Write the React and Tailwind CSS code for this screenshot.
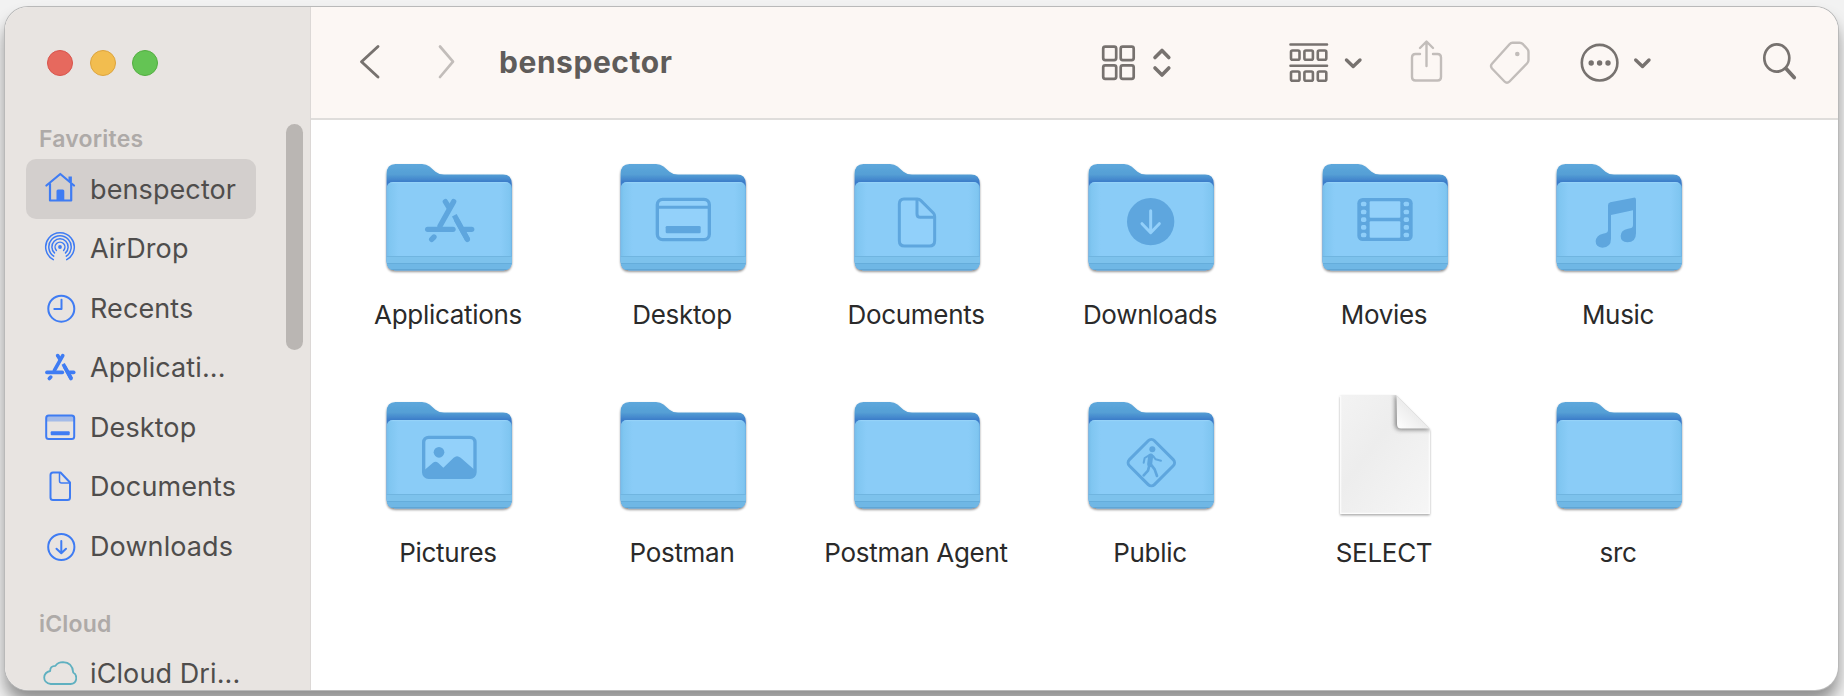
import React from "react";

const GLYPH = "#5ea6de";

function AppsShape({ color, sw = 16 }) {
  return (
    <g stroke={color} strokeWidth={sw} strokeLinecap="round" fill="none">
      <path d="M256 185 L266 201" />
      <path d="M281 185 L240 258" />
      <path d="M283 226 L323 299" strokeLinecap="butt" />
      <path d="M290 240 L322 298" />
      <path d="M203 268 L279 268" />
      <path d="M314 268 L335 268" />
      <path d="M222 291 L215 298" />
    </g>
  );
}

const glyphs = {
  apps: (
    <g transform="translate(-19 -14) scale(.33333)">
      <AppsShape color={GLYPH} />
    </g>
  ),
  desktop: (
    <g transform="translate(-253 -14) scale(.33333)" stroke={GLYPH} fill="none">
      <rect x="892" y="178" width="156" height="121" rx="16" strokeWidth="10" fill="#93d1fa" />
      <path d="M892 202 H1048" strokeWidth="9" />
      <rect x="917" y="258" width="105" height="22" rx="4" fill={GLYPH} stroke="none" />
    </g>
  ),
  document: (
    <g transform="translate(-17 -14) scale(.33333)" stroke={GLYPH} fill="none" strokeWidth="9" strokeLinejoin="round">
      <path d="M222 177 H262 Q268 177 272 181 L310 219 Q314 223 314 230 V302 Q314 318 298 318 H224 Q208 318 208 302 V192 Q208 177 222 177 Z" fill="#91d0fa" />
      <path d="M261 180 V222 Q261 232 271 232 H311" />
    </g>
  ),
  download: (
    <g transform="translate(-251 -14) scale(.33333)">
      <circle cx="962" cy="245" r="71" fill={GLYPH} />
      <path d="M962 212 V276 M936 251 L962 278 L988 251" stroke="#93d0fa" strokeWidth="9" fill="none" strokeLinecap="round" strokeLinejoin="round" />
    </g>
  ),
  movie: (
    <g transform="translate(-25 -14) scale(.33333)">
      <rect x="202" y="174" width="166" height="129" rx="16" fill={GLYPH} />
      <rect x="239" y="184" width="92" height="49" rx="3" fill="#93d1fa" />
      <rect x="239" y="244" width="92" height="49" rx="3" fill="#93d1fa" />
      {[185, 209, 232, 255, 278].map((y) => (
        <g key={y} fill="#8fcef9">
          <rect x="213" y={y} width="16" height="14" rx="5" />
          <rect x="341" y={y} width="16" height="14" rx="5" />
        </g>
      ))}
    </g>
  ),
  music: (
    <g transform="translate(-259 -14) scale(.33333)" fill={GLYPH}>
      <path d="M954 196 Q954 189 961 187 L1031 173 Q1038 172 1038 179 V280 Q1038 307 1012 307 Q992 306 992 288 Q992 270 1014 266 L1024 264 Q1029 262 1029 256 V211 L963 225 V296 Q963 322 937 323 Q917 322 917 304 Q918 286 939 281 L948 279 Q954 277 954 271 Z" />
    </g>
  ),
  picture: (
    <g transform="translate(-19 -12) scale(.33333)">
      <rect x="191" y="172" width="154" height="120" rx="15" fill="#93d1fa" stroke={GLYPH} strokeWidth="10" />
      <circle cx="237" cy="217" r="16" fill={GLYPH} />
      <path d="M191 272 L219 248 Q227 242 235 249 L250 263 L281 233 Q291 224 302 233 L345 271 V282 Q345 293 334 293 H202 Q191 293 191 282 Z" fill={GLYPH} />
    </g>
  ),
  walk: (
    <g transform="translate(-21 -12) scale(.33333)" stroke={GLYPH} fill="none" strokeLinecap="round" strokeLinejoin="round">
      <rect x="221" y="195" width="106" height="106" rx="13" transform="rotate(45 274 248)" strokeWidth="9" />
      <circle cx="277" cy="208" r="9" fill={GLYPH} stroke="none" />
      <path d="M272 228 L269 252" strokeWidth="15" />
      <path d="M266 227 L254 234 L251 248 M279 228 L287 238 L303 242" strokeWidth="6" />
      <path d="M268 256 L264 272 L251 286 M273 254 L284 268 L291 288" strokeWidth="8" />
    </g>
  ),
};

function Folder({ glyph }) {
  return (
    <svg width="140" height="130" viewBox="0 0 140 130">
      <defs>
        <linearGradient id="back" x1="0" y1="10" x2="0" y2="29" gradientUnits="userSpaceOnUse">
          <stop offset="0" stopColor="#5ea8dc" />
          <stop offset=".55" stopColor="#559fd5" />
          <stop offset=".95" stopColor="#3b7cc9" />
        </linearGradient>
        <linearGradient id="front" x1="0" y1="0" x2="1" y2="0">
          <stop offset="0" stopColor="#74bce9" />
          <stop offset=".03" stopColor="#80c6f1" />
          <stop offset=".1" stopColor="#8accf7" />
          <stop offset=".9" stopColor="#8accf7" />
          <stop offset=".97" stopColor="#80c6f1" />
          <stop offset="1" stopColor="#74bce9" />
        </linearGradient>
        <filter id="fshadow" x="-10%" y="-10%" width="120%" height="130%">
          <feDropShadow dx="0" dy="1.5" stdDeviation="1.2" floodColor="#000" floodOpacity=".48" />
        </filter>
        <clipPath id="frontclip">
          <path d="M7.600 35 Q7.600 28 14.500 28 H126 Q132.800 28 132.800 35 V107 Q132.800 116.300 124 116.300 H16.500 Q7.600 116.300 7.600 107 Z" />
        </clipPath>
      </defs>
      <g filter="url(#fshadow)">
        <path d="M7.600 20 Q7.600 10 16.500 10 H43 Q47.500 10 50.500 12.500 L56.500 17.700 Q60 20.600 65 20.600 H124 Q132.800 20.600 132.800 30 V107 Q132.800 116.300 124 116.300 H16.500 Q7.600 116.300 7.600 107 Z" fill="url(#back)" />
      </g>
      <g clipPath="url(#frontclip)">
        <rect x="7" y="28" width="127" height="89" fill="url(#front)" />
        <rect x="7" y="28" width="127" height="1.200" fill="#95d2f8" />
        <rect x="7" y="102" width="127" height="7" fill="#7dc2ec" />
        <rect x="7" y="102" width="127" height="1" fill="#70b5e0" />
        <rect x="7" y="109" width="127" height="8" fill="#6fb7e5" />
        <rect x="7" y="109" width="127" height="1" fill="#65addb" />
        <rect x="7" y="115.300" width="127" height="1.500" fill="#5a9fcf" />
      </g>
      {glyph && glyphs[glyph]}
    </svg>
  );
}

function Paper() {
  return (
    <svg width="140" height="130" viewBox="0 0 140 130">
      <defs>
        <linearGradient id="sheet" x1="0" y1="0" x2="1" y2="1">
          <stop offset="0" stopColor="#f3f3f3" />
          <stop offset=".4" stopColor="#ededed" />
          <stop offset="1" stopColor="#f6f6f6" />
        </linearGradient>
        <linearGradient id="curl" x1="81" y1="37" x2="98" y2="20" gradientUnits="userSpaceOnUse">
          <stop offset="0" stopColor="#ffffff" />
          <stop offset="1" stopColor="#ececec" />
        </linearGradient>
        <filter id="pshadow" x="-10%" y="-10%" width="120%" height="120%">
          <feDropShadow dx="0" dy="1.4" stdDeviation=".9" floodColor="#000" floodOpacity=".34" />
        </filter>
        <filter id="soft" x="-30%" y="-30%" width="160%" height="160%">
          <feGaussianBlur stdDeviation="2" />
        </filter>
        <clipPath id="sheetclip">
          <path d="M25 3 H81 L115 37 V122 H25 Z" />
        </clipPath>
      </defs>
      <path d="M26.500 3 H81 L115 37 V120.500 Q115 122 113.500 122 H26.500 Q25 122 25 120.500 V4.500 Q25 3 26.500 3 Z" fill="url(#sheet)" filter="url(#pshadow)" />
      <path d="M25.700 4 V121.300 H114.300 V37" fill="none" stroke="#fcfcfc" strokeWidth="1.200" />
      <g clipPath="url(#sheetclip)">
        <path d="M80 2 V32 Q80 38 86 38 H116 Z" fill="#777" opacity=".9" filter="url(#soft)" />
      </g>
      <path d="M81.500 3.500 L114.500 36.500 H86 Q82 36.500 82 32 Z" fill="url(#curl)" />
    </svg>
  );
}

const files = [
  ["Applications", "apps"],
  ["Desktop", "desktop"],
  ["Documents", "document"],
  ["Downloads", "download"],
  ["Movies", "movie"],
  ["Music", "music"],
  ["Pictures", "picture"],
  ["Postman", null],
  ["Postman Agent", null],
  ["Public", "walk"],
  ["SELECT", "paper"],
  ["src", null],
];

const BLUE = "#3f7cf3";

const sideIcons = {
  home: (
    <g fill="none" stroke={BLUE} strokeWidth="2.200" strokeLinecap="round" strokeLinejoin="round">
      <path d="M3.400 13.500 L17.300 2 L31 13.500" />
      <path d="M7 12 V28.500 H28.200 V12" />
      <path d="M27.200 10 V4.500" strokeWidth="3.400" strokeLinecap="butt" />
      <path d="M13.500 29 V19 Q13.500 17.500 15 17.500 H19.800 Q21.300 17.500 21.300 19 V29 Z" fill={BLUE} stroke="none" />
    </g>
  ),
  airdrop: (
    <g fill="none" stroke={BLUE} strokeWidth="1.500" strokeLinecap="round">
      <path d="M10.300 28.600 A14.300 14.300 0 1 1 23.700 28.600" />
      <path d="M10.700 25.200 A11.200 11.200 0 1 1 23.300 25.200" />
      <path d="M11.500 21.900 A8.100 8.100 0 1 1 22.500 21.900" />
      <path d="M13.400 19.400 A4.900 4.900 0 1 1 20.600 19.400" />
      <circle cx="17" cy="16" r="1.900" fill={BLUE} stroke="none" />
    </g>
  ),
  clock: (
    <g fill="none" stroke={BLUE} strokeWidth="2" strokeLinecap="round" strokeLinejoin="round">
      <circle cx="18.300" cy="17.700" r="13" />
      <path d="M18.500 8.800 V18 H11.300" />
    </g>
  ),
  apps: (
    <g transform="translate(-37.300 -32) scale(.203)">
      <AppsShape color={BLUE} sw={18} />
    </g>
  ),
  desktop: (
    <g fill="none" stroke={BLUE} strokeWidth="2">
      <rect x="3.200" y="5.500" width="28" height="23.500" rx="2.500" />
      <rect x="3" y="5.500" width="28.500" height="6" fill={BLUE} fillOpacity=".4" stroke="none" />
      <rect x="7.700" y="21.300" width="19" height="4" rx="1" fill={BLUE} stroke="none" />
    </g>
  ),
  document: (
    <g fill="none" stroke={BLUE} strokeWidth="2" strokeLinejoin="round">
      <path d="M10 3.500 H17.500 L27 13.500 V28.500 Q27 31 24.500 31 H10 Q7.500 31 7.500 28.500 V6 Q7.500 3.500 10 3.500 Z" />
      <path d="M16.500 4 V12 Q16.500 14 18.500 14 H26.500" strokeWidth="1.500" />
    </g>
  ),
  download: (
    <g fill="none" stroke={BLUE} strokeWidth="2" strokeLinecap="round" strokeLinejoin="round">
      <circle cx="18.300" cy="18" r="13.100" />
      <path d="M18.300 12 V24 M13.500 19.700 L18.300 24.300 L23 19.700" />
    </g>
  ),
  cloud: (
    <path
      d="M7.800 28 Q1.200 27 1.200 21.500 Q1.500 16.300 7.200 15 Q7 10 12.500 9.800 Q15 6.200 20 6.200 Q29.500 6.500 30.200 16.500 Q33.300 18 33.300 22 Q33 28 27.500 28 Z"
      fill="none"
      stroke="#5fb0c0"
      strokeWidth="1.800"
      strokeLinejoin="round"
    />
  ),
};

const favorites = [
  ["benspector", "home"],
  ["AirDrop", "airdrop"],
  ["Recents", "clock"],
  ["Applicati...", "apps"],
  ["Desktop", "desktop"],
  ["Documents", "document"],
  ["Downloads", "download"],
];

function SideRow({ label, icon, active }) {
  return (
    <div
      className={
        "flex h-[59.5px] w-[230px] shrink-0 items-center gap-[13px] rounded-[10px] pl-[17px] text-[27px] leading-[32px] tracking-[0.1px] text-[#4f4d4c] " +
        (active ? "bg-[#d3cfcd]" : "")
      }
    >
      <svg width="34" height="34" viewBox="0 0 34 34" className="shrink-0">
        {sideIcons[icon]}
      </svg>
      <span className="pt-[2px] whitespace-nowrap">{label}</span>
    </div>
  );
}

function Tool({ x, w, className = "", children, faint, sw = 2.7 }) {
  return (
    <svg
      width={w}
      height="48"
      viewBox={`${x} 38 ${w} 48`}
      className={"shrink-0 " + className}
      fill="none"
      stroke={faint ? "#c2bdba" : "#77726f"}
      strokeWidth={sw}
      strokeLinecap="round"
      strokeLinejoin="round"
    >
      {children}
    </svg>
  );
}

function Toolbar() {
  return (
    <div className="flex h-[113px] shrink-0 items-start border-b-2 border-[#dfdddb] bg-[#fcf7f4] pt-[31px]">
      <Tool x={358} w={24} className="ml-[47px]" sw={2.9}>
        <path d="M378 46.500 L361.500 61.700 L378 77" />
      </Tool>
      <Tool x={436} w={20} className="ml-[54px]" faint sw={2.7}>
        <path d="M440 46.500 L453 61.700 L440 77" />
      </Tool>
      <h1 className="ml-[43px] w-[220px] text-[30px] leading-[48px] font-bold tracking-[0.55px] text-[#5f5c5a]">benspector</h1>
      <Tool x={1100} w={38} className="ml-[381px]">
        <rect x="1103.200" y="46.600" width="13" height="13.500" rx="2" />
        <rect x="1120.700" y="46.600" width="13" height="13.500" rx="2" />
        <rect x="1103.200" y="65.300" width="13" height="13.500" rx="2" />
        <rect x="1120.700" y="65.300" width="13" height="13.500" rx="2" />
      </Tool>
      <Tool x={1150} w={24} className="ml-[12px]" sw={3.6}>
        <path d="M1155 57.500 L1162 50.500 L1168.800 57.500 M1155 68 L1162 75 L1168.800 68" />
      </Tool>
      <Tool x={1286} w={44} className="ml-[112px]" sw={2.6}>
        <path d="M1290.500 44.500 H1327 M1290.500 65.700 H1327" />
        {[1291, 1304.400, 1317.800].map((x) => (
          <g key={x}>
            <rect x={x} y="50.500" width="8.500" height="9.300" rx="1.500" />
            <rect x={x} y="71.500" width="8.500" height="9.300" rx="1.500" />
          </g>
        ))}
      </Tool>
      <Tool x={1342} w={22} className="ml-[12px]" sw={3.4}>
        <path d="M1346.500 60 L1353.200 66.500 L1360 60" />
      </Tool>
      <Tool x={1408} w={38} className="ml-[44px]" faint sw={2.400}>
        <path d="M1420 54 H1415.500 Q1412 54 1412 57.500 V77 Q1412 80.500 1415.500 80.500 H1437.500 Q1441 80.500 1441 77 V57.500 Q1441 54 1437.500 54 H1433" />
        <path d="M1426.500 66 V42 M1420 48 L1426.500 41.500 L1433 48" />
      </Tool>
      <Tool x={1488} w={44} className="ml-[42px]" faint sw={2.400}>
        <path d="M1512.500 42.700 H1519.500 Q1521.500 42.700 1523 44.200 L1527 48.500 Q1528.500 50 1528.500 52 V60 Q1528.500 62 1527 63.500 L1509.500 81.500 Q1507 84 1504.500 81.500 L1492 68.500 Q1490 66 1492 63.800 L1509.500 44.200 Q1510.800 42.700 1512.500 42.700 Z" />
        <circle cx="1517.300" cy="54" r="2.300" fill="#c2bdba" stroke="none" />
      </Tool>
      <Tool x={1576} w={46} className="ml-[44px]" sw={2.600}>
        <circle cx="1599.600" cy="62.700" r="17.800" />
        <g fill="#77726f" stroke="none">
          <circle cx="1591.200" cy="63" r="2.700" />
          <circle cx="1599.600" cy="63" r="2.700" />
          <circle cx="1608" cy="63" r="2.700" />
        </g>
      </Tool>
      <Tool x={1630} w={24} className="ml-[8px]" sw={3.400}>
        <path d="M1635.700 60 L1642.500 66.500 L1649 60" />
      </Tool>
      <Tool x={1760} w={40} className="ml-[106px]" sw={2.700}>
        <ellipse cx="1776.800" cy="58" rx="12.500" ry="13.700" />
        <path d="M1786 68.500 L1794.200 77.500" strokeWidth="3.800" />
      </Tool>
    </div>
  );
}

export default function App() {
  return (
    <div className="flex h-[696px] w-[1844px] overflow-hidden bg-[#f2f2f2] pt-[7px] pl-[5px] font-['Inter',sans-serif]">
      <div className="flex h-[683px] w-[1833px] overflow-hidden rounded-[23px] bg-white shadow-[0_0_0_1px_#b9b9b9,0_12px_16px_rgba(0,0,0,0.42)]">
        <aside className="flex w-[306px] shrink-0 overflow-hidden border-r border-[#dcd8d6] bg-[#e8e4e1]">
          <div className="flex w-[281px] shrink-0 flex-col pl-[21px]">
            <div className="flex shrink-0 gap-[16.500px] pt-[43px] pl-[21px]">
              <span className="size-[26px] rounded-full border border-[#d9534b] bg-[#e6695e]" />
              <span className="size-[26px] rounded-full border border-[#dda43c] bg-[#f2bd4f]" />
              <span className="size-[26px] rounded-full border border-[#52ae40] bg-[#64c454]" />
            </div>
            <h2 className="mt-[48px] ml-[13px] h-[35px] shrink-0 text-[23px] leading-[30px] font-semibold tracking-[0.2px] text-[#aeaaa8]">Favorites</h2>
            {favorites.map(([label, icon], i) => (
              <SideRow key={label} label={label} icon={icon} active={i === 0} />
            ))}
            <h2 className="mt-[33px] ml-[13px] h-[35px] shrink-0 text-[23px] leading-[30px] font-semibold tracking-[0.2px] text-[#aeaaa8]">iCloud</h2>
            <SideRow label="iCloud Dri..." icon="cloud" />
          </div>
          <div className="mt-[117px] h-[226px] w-[17px] rounded-full bg-[#bab6b3]" />
        </aside>
        <main className="flex min-w-0 flex-1 flex-col">
          <Toolbar />
          <div className="grid grid-cols-[repeat(6,234px)] auto-rows-[238px] pt-[34px] pl-[21px]">
            {files.map(([label, glyph]) => (
              <div key={label} className="flex flex-col items-center">
                {glyph === "paper" ? <Paper /> : <Folder glyph={glyph} />}
                <span className="mt-[15px] mr-[2px] text-[26px] leading-[32px] tracking-[-0.3px] whitespace-nowrap text-[#2a2a2a]">{label}</span>
              </div>
            ))}
          </div>
        </main>
      </div>
    </div>
  );
}
